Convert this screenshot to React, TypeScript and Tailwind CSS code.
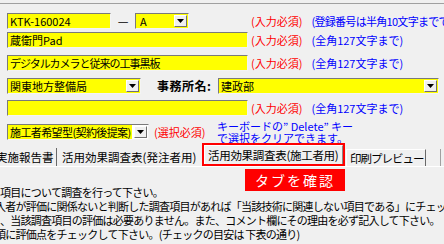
import React from "react";

const sunken =
  "border border-t-[#7a7a7a] border-l-[#7a7a7a] border-b-[#f4f4f4] border-r-[#f4f4f4]";

function Arrow() {
  return (
    <span className="h-[12px] w-[13px] shrink-0 flex items-center justify-center bg-[#f0f0f0] border border-t-white border-l-white border-b-[#707070] border-r-[#707070]">
      <svg width="7" height="4" viewBox="0 0 7 4">
        <path d="M0 0h7L3.5 4z" fill="#000" />
      </svg>
    </span>
  );
}

function Required({ text = "(入力必須)" }: { text?: string }) {
  return <span className="text-[#ff0000] whitespace-nowrap">{text}</span>;
}

function Note({ text = "(全角127文字まで)" }: { text?: string }) {
  return <span className="ml-[9px] text-[#0000ff] whitespace-nowrap">{text}</span>;
}

export default function App() {
  return (
    <div className="w-[444px] h-[244px] overflow-hidden bg-[#f0f0f0] relative font-['Noto_Sans_CJK_JP',sans-serif] text-[11px] leading-[14px] text-black">
      <div className="mt-[3px] h-[241px] border-t border-[#a0a0a0] overflow-hidden">
        <div className="pl-[7px] pt-[9px] flex flex-col">
          {/* row 1 */}
          <div className="h-[16px] flex items-center whitespace-nowrap">
            <div className="w-[244px] shrink-0 flex items-center">
              <div className={`w-[104px] h-[16px] ${sunken} bg-[#ffff00] flex items-center pl-[2px]`}>
                KTK-160024
              </div>
              <span className="w-[24px] text-center text-[12px]">—</span>
              <div className={`w-[54px] h-[16px] ${sunken} bg-[#ffff00] flex items-center pl-[4px] pr-[1px]`}>
                <span className="flex-1">A</span>
                <Arrow />
              </div>
            </div>
            <Required />
            <span className="ml-[9px] text-[#0000ff] tracking-[-0.7px]">
              (登録番号は半角10文字までで入力)
            </span>
          </div>

          {/* row 2 */}
          <div className="mt-[3px] h-[16px] flex items-center">
            <div className="w-[244px]">
              <div className={`w-[241px] h-[16px] ${sunken} bg-[#ffff00] flex items-center pl-[2px]`}>
                蔵衛門Pad
              </div>
            </div>
            <Required />
            <Note />
          </div>

          {/* row 3 */}
          <div className="mt-[7px] h-[16px] flex items-center">
            <div className="w-[244px]">
              <div className={`w-[241px] h-[16px] ${sunken} bg-[#ffff00] flex items-center pl-[2px] tracking-[-1px]`}>
                デジタルカメラと従来の工事黒板
              </div>
            </div>
            <Required />
            <Note />
          </div>

          {/* row 4 */}
          <div className="mt-[7px] h-[16px] flex items-center">
            <div className={`w-[134px] h-[16px] ${sunken} bg-[#ffff00] flex items-center pl-[2px] pr-[1px]`}>
              <span className="flex-1">関東地方整備局</span>
              <Arrow />
            </div>
            <span className="ml-[16px] w-[61px] font-bold text-[12px] tracking-[0.5px]">事務所名:</span>
            <div className={`w-[221px] h-[16px] ${sunken} bg-[#ffff00] flex items-center pl-[2px] pr-[1px]`}>
              <span className="flex-1">建政部</span>
              <Arrow />
            </div>
          </div>

          {/* row 5 */}
          <div className="mt-[6px] h-[16px] flex items-center">
            <div className="w-[244px]">
              <div className={`w-[241px] h-[16px] ${sunken} bg-[#ffff00]`} />
            </div>
            <Required />
            <Note />
          </div>

          {/* row 6 */}
          <div className="mt-[8px] h-[16px] flex items-center">
            <div className={`w-[142px] h-[16px] ${sunken} bg-white flex items-center pr-[1px]`}>
              <span className="flex-1 h-full bg-[#ffff00] flex items-center pl-[2px] tracking-[-0.6px] whitespace-nowrap overflow-hidden">
                施工者希望型(契約後提案)
              </span>
              <span className="ml-[2px]">
                <Arrow />
              </span>
            </div>
            <span className="ml-[5px] w-[63px]">
              <Required text="(選択必須)" />
            </span>
            <div className="text-[#0000ff] leading-[12.5px] whitespace-nowrap">
              <div>キーボードの” Delete” キー</div>
              <div>で選択をクリアできます。</div>
            </div>
          </div>
        </div>

        {/* tabs */}
        <div className="mt-[4px] h-[23px] flex items-end border-b border-white text-[11.5px]">
          <div className="w-[57px] h-[18px] flex items-center border-r border-[#696969] whitespace-nowrap overflow-hidden">
            <span className="-ml-[4px]">実施報告書</span>
          </div>
          <div className="w-[145px] h-[18px] flex items-center pl-[5px] whitespace-nowrap">
            活用効果調査表(発注者用)
          </div>
          <div className="w-[143px] h-[23px] border-2 border-[#ff0000] flex items-end">
            <div className="flex-1 h-[19px] bg-[#f0f0f0] border-t border-l border-white border-r border-r-[#8a8a8a] flex items-center pl-[3px] whitespace-nowrap tracking-[-0.3px]">
              活用効果調査表(施工者用)
            </div>
          </div>
          <div className="ml-[1px] w-[80px] h-[17px] border-t border-l border-white border-r border-r-[#696969] flex items-center pl-[3px] whitespace-nowrap tracking-[-1px]">
            印刷プレビュー
          </div>
          <div className="ml-[14px] h-[17px] border-l border-[#a0a0a0] flex-1" />
        </div>

        {/* body */}
        <div className="mt-[18px] text-[11px] leading-[14px] tracking-[-0.75px] whitespace-nowrap">
          <div>項目について調査を行って下さい。</div>
          <div className="-ml-[5px]">入者が評価に関係ないと判断した調査項目があれば「当該技術に関連しない項目である」にチェック</div>
          <div>、当該調査項目の評価は必要ありません。また、コメント欄にその理由を必ず記入して下さい。</div>
          <div className="-ml-[5px]">項に評価点をチェックして下さい。(チェックの目安は 下表の通り)</div>
        </div>
      </div>

      {/* callout */}
      <div className="absolute left-[245px] top-[169px] w-[100px] h-[22px] bg-[#ff0000] text-white text-[14px] tracking-[2px] flex items-center justify-center">
        タブを確認
      </div>
    </div>
  );
}
